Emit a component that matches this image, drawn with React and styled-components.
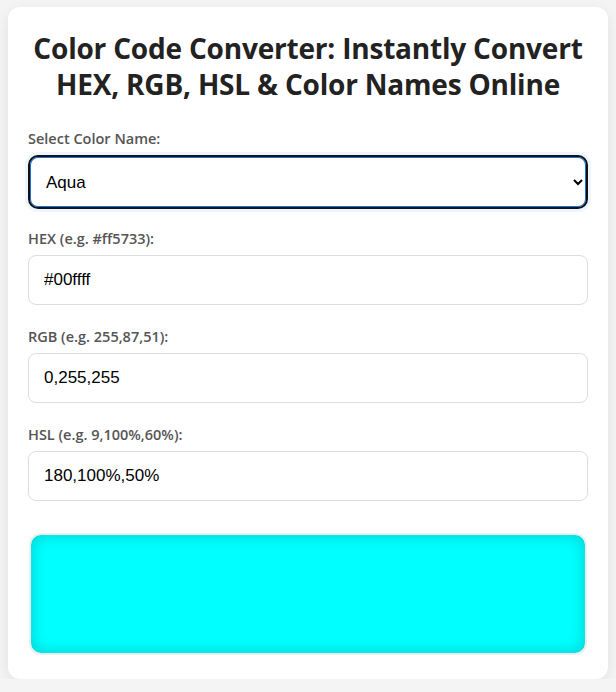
import React, { useState } from 'react';
import styled, { createGlobalStyle } from 'styled-components';

const colorNames = {
  Aqua: '#00ffff',
  Black: '#000000',
  Blue: '#0000ff',
  Red: '#ff0000',
  White: '#ffffff'
};

const GlobalStyle = createGlobalStyle`
  html, body {
    margin: 0;
    padding: 0;
    background: #f4f4f4;
  }
  body {
    font-family: "Open Sans", "Noto Sans", "Liberation Sans", sans-serif;
    padding-top: 7px;
  }
`;

const Card = styled.div`
  box-sizing: border-box;
  width: 600px;
  margin: 0 auto;
  background: #fff;
  border-radius: 12px;
  padding: 23px 20px 24px;
  box-shadow: 0 4px 14px rgba(0, 0, 0, 0.08);
`;

const Title = styled.h1`
  margin: 0 0 27px;
  font-size: 28px;
  line-height: 36px;
  font-weight: 700;
  letter-spacing: -0.2px;
  text-align: center;
  color: #222;
`;

const Field = styled.div`
  display: flex;
  flex-direction: column;
  margin-bottom: ${p => (p.$first ? '20px' : '22px')};
`;

const Label = styled.label`
  font-size: 14.5px;
  line-height: 19px;
  font-weight: 600;
  color: #555;
  margin-bottom: 7px;
`;

const Select = styled.select`
  box-sizing: border-box;
  height: 54px;
  width: 100%;
  padding: 0 12px;
  font-family: "Liberation Sans", Arial, sans-serif;
  font-size: 17px;
  color: #000;
  background: #fff;
  border: 2px solid #111;
  border-radius: 10px;
  box-shadow: inset 0 0 0 1px #1a6fd8, 0 0 0 3px rgba(0, 120, 255, 0.07);
  outline: none;
`;

const Input = styled.input`
  box-sizing: border-box;
  height: 50px;
  width: 100%;
  padding: 0 15px;
  font-family: "Liberation Sans", Arial, sans-serif;
  font-size: 17px;
  color: #000;
  background: #fff;
  border: 1px solid #ddd;
  border-radius: 8px;
  outline: none;
`;

const Preview = styled.div`
  box-sizing: border-box;
  height: 122px;
  margin: 32px 1px 0 1px;
  border: 2px solid #eee;
  border-radius: 12px;
  box-shadow: inset 0 0 16px rgba(0, 0, 0, 0.2);
`;

export default function App() {
  const [name, setName] = useState('Aqua');
  const hex = colorNames[name];

  return (
    <>
      <GlobalStyle />
      <Card>
        <Title>
          Color Code Converter: Instantly Convert HEX, RGB, HSL &amp; Color Names Online
        </Title>
        <Field $first>
          <Label>Select Color Name:</Label>
          <Select value={name} onChange={e => setName(e.target.value)}>
            {Object.keys(colorNames).map(n => (
              <option key={n} value={n}>
                {n}
              </option>
            ))}
          </Select>
        </Field>
        <Field>
          <Label>HEX (e.g. #ff5733):</Label>
          <Input defaultValue="#00ffff" />
        </Field>
        <Field>
          <Label>RGB (e.g. 255,87,51):</Label>
          <Input defaultValue="0,255,255" />
        </Field>
        <Field>
          <Label>HSL (e.g. 9,100%,60%):</Label>
          <Input defaultValue="180,100%,50%" />
        </Field>
        <Preview style={{ background: hex }} />
      </Card>
    </>
  );
}
